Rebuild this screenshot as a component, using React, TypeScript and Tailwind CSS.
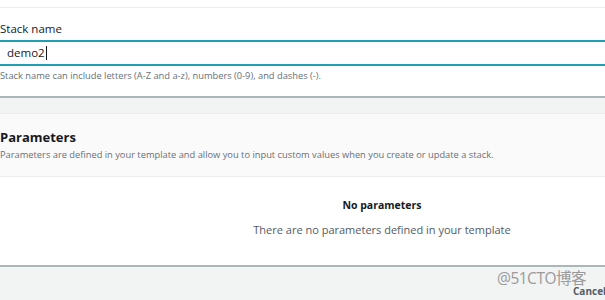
import React from 'react';

const font = { fontFamily: '"Open Sans", "Noto Sans CJK SC", sans-serif' };

export default function App() {
  return (
    <div className="relative w-[605px] h-[300px] overflow-hidden bg-[#f2f3f3] text-[#16191f]" style={font}>
      <div className="w-[766px] -ml-[1px]">
        {/* top strip */}
        <div className="h-[8px] bg-white border-b border-[#eaeded]" />

        {/* stack name card */}
        <section className="bg-white border-b-2 border-[#aab7b8] h-[90px] pt-[14px]">
          <label className="block text-[11.5px] leading-[14px] pl-[1px]">Stack name</label>
          <div className="mt-[4px] h-[26px] border-y-2 border-[#1e9fb3] flex items-center pl-[8px] text-[11.5px]">
            demo2
            <span className="ml-[1px] w-[1px] h-[14px] bg-[#16191f]" />
          </div>
          <p className="mt-[3px] text-[9.3px] leading-[13px] text-[#687078] pl-[1px]">
            Stack name can include letters (A-Z and a-z), numbers (0-9), and dashes (-).
          </p>
        </section>

        <div className="h-[15px] bg-[#f2f3f3]" />

        {/* parameters card */}
        <section className="bg-white border-t border-[#eaeded]">
          <header className="bg-[#fafafa] border-b border-[#eaeded] h-[63px] pt-[15px] pl-[1px]">
            <h2 className="text-[13px] leading-[17px] font-bold">Parameters</h2>
            <p className="mt-[2px] text-[9.3px] leading-[13px] text-[#687078]">
              Parameters are defined in your template and allow you to input custom values when you create or update a stack.
            </p>
          </header>
          <div className="h-[88px] flex flex-col items-center pt-[21px]">
            <div className="text-[10.5px] leading-[14px] font-bold">No parameters</div>
            <div className="mt-[10px] text-[11px] leading-[15px] text-[#545b64]">
              There are no parameters defined in your template
            </div>
          </div>
        </section>

        {/* footer */}
        <div className="border-t-2 border-[#aab7b8] h-[40px] bg-[#f2f3f3]" />
      </div>

      <div className="absolute left-[497px] top-[269px] text-[15.5px] leading-[19px] text-[#9a9a9a] tracking-[-0.5px]">
        @51CTO博客
      </div>
      <div className="absolute left-[573px] top-[285px] text-[10px] leading-[12px] font-bold text-[#545b64]">
        Cancel
      </div>
    </div>
  );
}
